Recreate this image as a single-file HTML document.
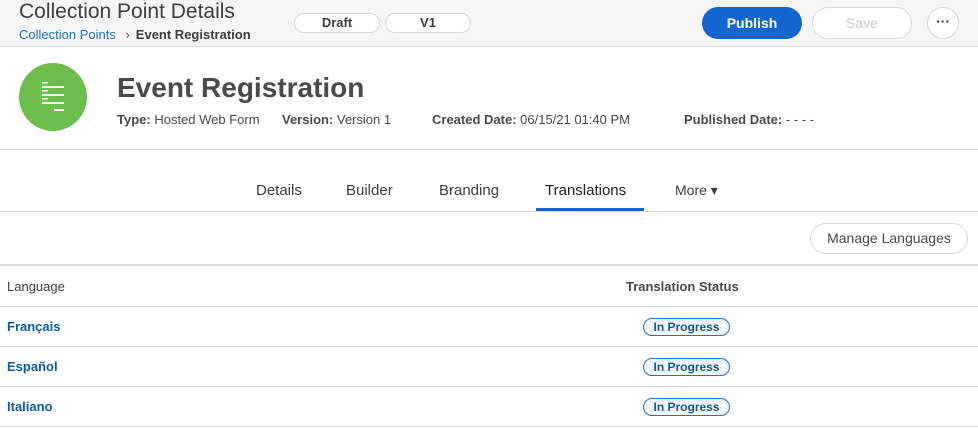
<!DOCTYPE html><html><head><style>
*{margin:0;padding:0;box-sizing:border-box}
body{width:978px;height:428px;overflow:hidden;background:#fff;font-family:"Liberation Sans",sans-serif;color:#3e3e3c;position:relative}
.a{position:absolute;white-space:nowrap}
.pill{position:absolute;border:1px solid #d8d8d8;border-radius:20px;background:#fff;text-align:center;font-size:13px;font-weight:bold;color:#3e3e3c}
.hl{position:absolute;left:0;width:978px;height:1px;background:#dcdcdc}
.lang{position:absolute;left:7px;font-size:13px;font-weight:bold;color:#0b5cab}
.st{position:absolute;left:643px;width:87px;height:18px;border:1px solid #1d6fd0;border-radius:9px;background:#f4f9ff;color:#0b5cab;font-size:12px;font-weight:bold;text-align:center;line-height:16px}
</style></head><body>
<div class="a" style="left:0;top:0;width:978px;height:47px;background:#f6f6f6;border-bottom:1px solid #dcdcdc"></div>
<div class="a" style="left:19px;top:0px;font-size:21px;color:#3e3e3c">Collection Point Details</div>
<div class="a" style="left:19px;top:27px;font-size:13px;color:#1d6fd0">Collection Points <span style="color:#555;margin:0 6px">›</span><b style="color:#3e3e3c">Event Registration</b></div>
<div class="pill" style="left:294px;top:13px;width:86px;height:20px;line-height:18px">Draft</div>
<div class="pill" style="left:385px;top:13px;width:86px;height:20px;line-height:18px">V1</div>
<div class="a" style="left:702px;top:7px;width:100px;height:32px;border-radius:16px;background:#1366d0;color:#fff;font-size:14px;font-weight:bold;text-align:center;line-height:32px">Publish</div>
<div class="a" style="left:812px;top:7px;width:100px;height:32px;border-radius:16px;border:1px solid #d8d8d8;background:#fff;color:#c9c9c9;font-size:14px;text-align:center;line-height:30px">Save</div>
<div class="a" style="left:927px;top:7px;width:32px;height:32px;border-radius:50%;border:1px solid #d8d8d8;background:#fff;text-align:center;line-height:26px;font-size:14px;font-weight:bold;color:#333">···</div>
<div class="a" style="left:19px;top:63px;width:68px;height:68px;border-radius:50%;background:#6cbd4b"></div>
<svg class="a" style="left:0;top:0" width="100" height="140"><g fill="#fff">
<rect x="42" y="82" width="6" height="1.5"/><rect x="42" y="86" width="22" height="2"/><rect x="42" y="90" width="6" height="1.5"/><rect x="42" y="94" width="22" height="2"/><rect x="42" y="98" width="6" height="1.5"/><rect x="42" y="102" width="22" height="2"/><rect x="54" y="109" width="10" height="2"/></g></svg>
<div class="a" style="left:117px;top:72px;font-size:28px;font-weight:bold;color:#4a4a4a">Event Registration</div>
<div class="a" style="left:117px;top:112px;font-size:13px;color:#4a4a4a"><b>Type:</b> Hosted Web Form</div>
<div class="a" style="left:282px;top:112px;font-size:13px;color:#4a4a4a"><b>Version:</b> Version 1</div>
<div class="a" style="left:432px;top:112px;font-size:13px;color:#4a4a4a"><b>Created Date:</b> 06/15/21 01:40 PM</div>
<div class="a" style="left:684px;top:112px;font-size:13px;color:#4a4a4a"><b>Published Date:</b> - - - -</div>
<div class="hl" style="top:149px"></div>
<div class="a" style="left:256px;top:182px;font-size:15px">Details</div>
<div class="a" style="left:346px;top:182px;font-size:15px">Builder</div>
<div class="a" style="left:439px;top:182px;font-size:15px">Branding</div>
<div class="a" style="left:545px;top:182px;font-size:15px;color:#222">Translations</div>
<div class="a" style="left:536px;top:208px;width:108px;height:3px;background:#1366d0"></div>
<div class="a" style="left:675px;top:182px;font-size:14px">More ▾</div>
<div class="a" style="left:0;top:211px;width:978px;height:1px;background:#dcdcdc"></div>
<div class="a" style="left:810px;top:223px;width:158px;height:31px;border:1px solid #d8d8d8;border-radius:16px;font-size:14px;text-align:center;line-height:29px;color:#4a4a4a">Manage Languages</div>
<div class="a" style="left:0;top:264px;width:978px;height:2px;background:#dcdcdc"></div>
<div class="a" style="left:7px;top:279px;font-size:13px;color:#3e3e3c">Language</div>
<div class="a" style="left:626px;top:279px;font-size:13px;font-weight:bold;color:#4a4a4a">Translation Status</div>
<div class="hl" style="top:306px"></div>
<div class="lang" style="top:319px">Français</div><div class="st" style="top:318px">In Progress</div>
<div class="hl" style="top:346px"></div>
<div class="lang" style="top:359px">Español</div><div class="st" style="top:358px">In Progress</div>
<div class="hl" style="top:386px"></div>
<div class="lang" style="top:399px">Italiano</div><div class="st" style="top:398px">In Progress</div>
<div class="hl" style="top:426px"></div>
</body></html>
